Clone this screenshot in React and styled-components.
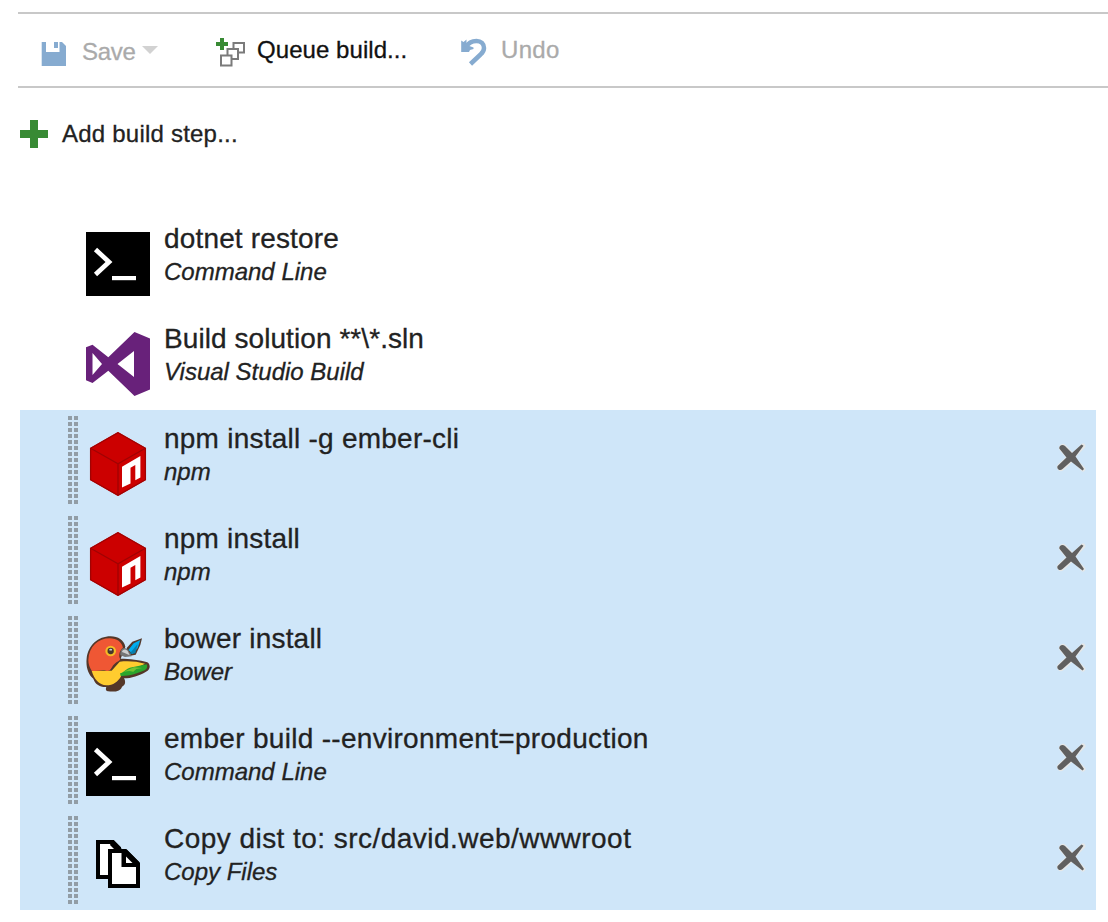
import React from 'react';
import styled, { createGlobalStyle } from 'styled-components';

const GlobalStyle = createGlobalStyle`
  * { box-sizing: border-box; }
  body {
    margin: 0;
    background: #fff;
    color: #222;
    font-family: "Liberation Sans", Arial, sans-serif;
    -webkit-text-stroke: 0.3px currentColor;
    overflow: hidden;
  }
  svg { display: block; flex: none; }
`;

const Page = styled.main`
  height: 922px;
  padding-top: 12px;
`;

const Toolbar = styled.div`
  display: flex;
  align-items: flex-start;
  height: 76px;
  margin-left: 18px;
  padding: 22px 0 0 22px;
  border-top: 2px solid #c8c8c8;
  border-bottom: 2px solid #c8c8c8;
`;

const ToolButton = styled.button`
  display: flex;
  align-items: flex-start;
  width: ${(p) => p.$width}px;
  padding: 0;
  border: 0;
  background: none;
  text-align: left;
  color: ${(p) => (p.$disabled ? '#aaa' : '#111')};
  font: 24px/28px "Liberation Sans", Arial, sans-serif;
`;

const ToolLabel = styled.span`
  margin: ${(p) => p.$top || 0}px 0 0 ${(p) => p.$left}px;
  letter-spacing: ${(p) => p.$track || 0}px;
  white-space: nowrap;
`;

const Caret = styled.span`
  width: 0;
  height: 0;
  margin: 10px 0 0 6px;
  border-left: 8px solid transparent;
  border-right: 8px solid transparent;
  border-top: 8px solid #d2d2d2;
`;

const AddStep = styled.button`
  display: flex;
  align-items: flex-start;
  gap: 14px;
  height: 122px;
  padding: 32px 0 0 20px;
  border: 0;
  background: none;
  color: #222;
  font: 24px/28px "Liberation Sans", Arial, sans-serif;
  letter-spacing: 0.22px;
`;

const StepList = styled.ul`
  list-style: none;
  margin: 0 12px 0 20px;
  padding: 0;
`;

const Step = styled.li`
  display: flex;
  align-items: flex-start;
  height: 100px;
  padding: 6px 8px 0 48px;
  background: ${(p) => (p.$selected ? '#cfe6f9' : 'transparent')};
`;

const StepIcon = styled.div`
  width: 64px;
  height: 64px;
  margin: 16px 14px 0 8px;
`;

const StepText = styled.div`
  flex: 1;
  padding-top: 6px;
  white-space: nowrap;
`;

const StepTitle = styled.div`
  font-size: 28px;
  line-height: 34px;
  letter-spacing: ${(p) => p.$track}px;
`;

const StepKind = styled.div`
  font-size: 24px;
  line-height: 32px;
  font-style: italic;
`;

const RemoveButton = styled.button`
  margin-top: 26px;
  padding: 0;
  border: 0;
  background: none;
`;

const HandleSpace = styled.div`
  width: 10px;
  height: 88px;
`;

function SaveIcon() {
  return (
    <svg width="28" height="32" viewBox="0 0 28 32">
      <path fill="#86abd0" d="M1.700 6H6v10h13.500V6H22l4 4v20H1.700zM14 6h4v6h-4z" />
    </svg>
  );
}

function QueueIcon() {
  return (
    <svg width="30" height="32" viewBox="0 0 30 32">
      <g fill="#fff" stroke="#7b7b7b" strokeWidth="2">
        <path d="M17.500 7h10.500v9.500H17.500z" />
        <path d="M11.500 13h10.500v10H11.500z" />
        <path d="M5 19.500h10.500v10H5z" />
      </g>
      <path fill="#388a34" d="M4 2h4v4h4v4H8v4H4v-4H0V6h4z" />
    </svg>
  );
}

function UndoIcon() {
  return (
    <svg width="28" height="32" viewBox="0 0 28 32">
      <path fill="#86abd0" d="M1.200 4.500 3.500 6 6.500 3.500V9l7 2.500V13L10 14l-1 2H1.200z" />
      <path fill="none" stroke="#86abd0" strokeWidth="4.500" d="M6 11C8.500 6.500 12 5 16.500 5c4.500 0 7.500 3 7.500 7 0 3-1 4.500-3.500 6.500l-10 9.500" />
    </svg>
  );
}

function PlusIcon() {
  return (
    <svg width="28" height="28" viewBox="0 0 28 28">
      <path fill="#388a34" d="M10 0h8v10h10v8H18v10h-8V18H0v-8h10z" />
    </svg>
  );
}

function DragHandle() {
  const rows = Array.from({ length: 15 }, (_, i) => i * 6);
  return (
    <svg width="10" height="88" viewBox="0 0 10 88" fill="#929da6">
      {rows.map((y) => (
        <path key={y} d={`M0 ${y}h4v4H0zM6 ${y}h4v4H6z`} />
      ))}
    </svg>
  );
}

function TerminalIcon() {
  return (
    <svg width="64" height="64" viewBox="0 0 64 64">
      <path d="M0 0h64v64H0z" />
      <path fill="none" stroke="#fff" strokeWidth="4.700" d="M9.500 17.500 23 30 9.500 42.500" />
      <path fill="#fff" d="M26 44h24v4.200H26z" />
    </svg>
  );
}

function VisualStudioIcon() {
  return (
    <svg width="64" height="64" viewBox="0 0 64 64">
      <path
        fill="#68217a"
        fillRule="evenodd"
        d="M0 15.300 6.500 12.700 22.300 25.300 48.500 0 64 6.500v51L48.500 64 22.300 38.700 6.500 51 0 48.300zM6.500 21v22L16 32zM48 19 31.500 32 48 45z"
      />
    </svg>
  );
}

function NpmIcon() {
  return (
    <svg width="64" height="64" viewBox="0 0 64 64">
      <path fill="#c00" d="M32 0 60 16v32L32 64 4 48V16z" />
      <path fill="none" stroke="#a00303" strokeWidth="1.300" d="M32 .7 59.400 16.300v31.400L32 63.300 4.600 47.700V16.300zM4.600 16.300 32 31.800l27.400-15.500M32 31.800v31.500" />
      <path fill="#fff" d="M36 34.800 54.400 24v21.500L49.300 48.300V33L44.500 35.800V51.500L36 55.500z" />
    </svg>
  );
}

function BowerIcon() {
  return (
    <svg width="64" height="64" viewBox="0 0 192 192">
      <path fill="#543729" d="M104 80C130 80 162 84 184 91c10 6 10 22-4 28-20 12-44 20-66 20 6 10 4 20-6 25-4 12-18 17-42 14-8-2-7-8-5-13-20 1-34-9-39-25C7 128-1 105 2 79 7 39 36 13 74 13c22 0 40 11 44 31z" />
      <path fill="#ffcc2f" d="M17 116h60l24-27c25-3 52-1 76 6l-40 20-31 16c-10 18-24 29-45 29-22-2-37-18-44-44z" />
      <path fill="#ef5734" d="M7 84C9 43 37 19 71 19c22 0 36 11 40 28-10 8-13 20-10 31 3 5 0 7-4 10-8 4-14 9-20 19-6 9-12 12-20 8-9-4-20 5-40 1-6-9-10-20-10-32z" />
      <path fill="#2ba52d" d="M102 124c12-1 17-15 36-18l44-9c3 6 2 14-6 18-20 9-48 18-72 17z" />
      <path fill="#75c332" d="m112 119 32-13 25 2-18 3-9 8-12-2z" />
      <path fill="#543729" d="M122 48 139 29 168 19 163 39 149 68 125 73z" />
      <path fill="#00acee" d="m127 54 16-20 20-10-8 24-15 18z" />
      <path fill="#087fae" d="m130 66 25-30-7 28z" />
      <path fill="#757575" d="M103 70c-1-18 8-28 20-19 7 6 10 14 14 22l-20 2z" />
      <path fill="#cecece" d="M108 60c1-9 11-10 17-3l6 13-15-7z" />
      <circle cx="74" cy="57" r="16" fill="#f5bc25" />
      <circle cx="74" cy="57" r="9.500" fill="#49352b" />
      <ellipse cx="74" cy="53" rx="4.500" ry="2.500" fill="#cbd5db" />
    </svg>
  );
}

function CopyIcon() {
  return (
    <svg width="64" height="64" viewBox="0 0 64 64">
      <g fill="#fff" stroke="#000" strokeWidth="4">
        <path d="M12 10h15l6 6v29H12z" />
        <path d="M24 19h15.500L52 31.500V54H24z" />
      </g>
      <path d="M35.500 18H41l12 12v5H35.500z" />
      <path fill="#fff" d="M40 24.500 46.500 31H40z" />
      <path d="m26 8 11 10h-8l-5-5z" />
    </svg>
  );
}

function RemoveIcon() {
  return (
    <svg width="32" height="32" viewBox="0 0 32 32" strokeLinecap="round">
      <g fill="none" stroke="#e5e7e7" strokeLinejoin="round">
        <path strokeWidth="8" d="M7 6l9 10M5 25l11-10" />
        <path strokeWidth="5" d="m15 15 12 12M15 16 27 4" />
      </g>
      <path fill="#606060" d="M3.300 6.500C3 3.200 6.500 2 9 4L16 11 25.500 2.500 27.500 3.800 19.500 14.500 28 27l-1.500 1.500L15 19.500 6.500 27C4 29.500 .3 27 1.600 24L10.500 15.500z" />
    </svg>
  );
}

const steps = [
  { title: 'dotnet restore', kind: 'Command Line', Icon: TerminalIcon, track: 0.16 },
  { title: 'Build solution **\\*.sln', kind: 'Visual Studio Build', Icon: VisualStudioIcon, track: 0.07 },
  { title: 'npm install -g ember-cli', kind: 'npm', Icon: NpmIcon, selected: true, track: 0.24 },
  { title: 'npm install', kind: 'npm', Icon: NpmIcon, selected: true, track: 0.2 },
  { title: 'bower install', kind: 'Bower', Icon: BowerIcon, selected: true, track: 0.2 },
  { title: 'ember build --environment=production', kind: 'Command Line', Icon: TerminalIcon, selected: true, track: 0.3 },
  { title: 'Copy dist to: src/david.web/wwwroot', kind: 'Copy Files', Icon: CopyIcon, selected: true, track: 0.46 },
];

export default function App() {
  return (
    <Page>
      <GlobalStyle />
      <Toolbar>
        <ToolButton $width={176} $disabled>
          <SaveIcon />
          <ToolLabel $left={14} $top={2} $track={-0.3}>Save</ToolLabel>
          <Caret />
        </ToolButton>
        <ToolButton $width={244}>
          <QueueIcon />
          <ToolLabel $left={11} $track={0.06}>Queue build...</ToolLabel>
        </ToolButton>
        <ToolButton $width={110} $disabled>
          <UndoIcon />
          <ToolLabel $left={13} $track={0.3}>Undo</ToolLabel>
        </ToolButton>
      </Toolbar>
      <AddStep>
        <PlusIcon />
        <span>Add build step...</span>
      </AddStep>
      <StepList>
        {steps.map(({ title, kind, Icon, selected, track }) => (
          <Step key={title} $selected={selected}>
            <HandleSpace>{selected && <DragHandle />}</HandleSpace>
            <StepIcon>
              <Icon />
            </StepIcon>
            <StepText>
              <StepTitle $track={track}>{title}</StepTitle>
              <StepKind>{kind}</StepKind>
            </StepText>
            {selected && (
              <RemoveButton aria-label="Remove step">
                <RemoveIcon />
              </RemoveButton>
            )}
          </Step>
        ))}
      </StepList>
    </Page>
  );
}
